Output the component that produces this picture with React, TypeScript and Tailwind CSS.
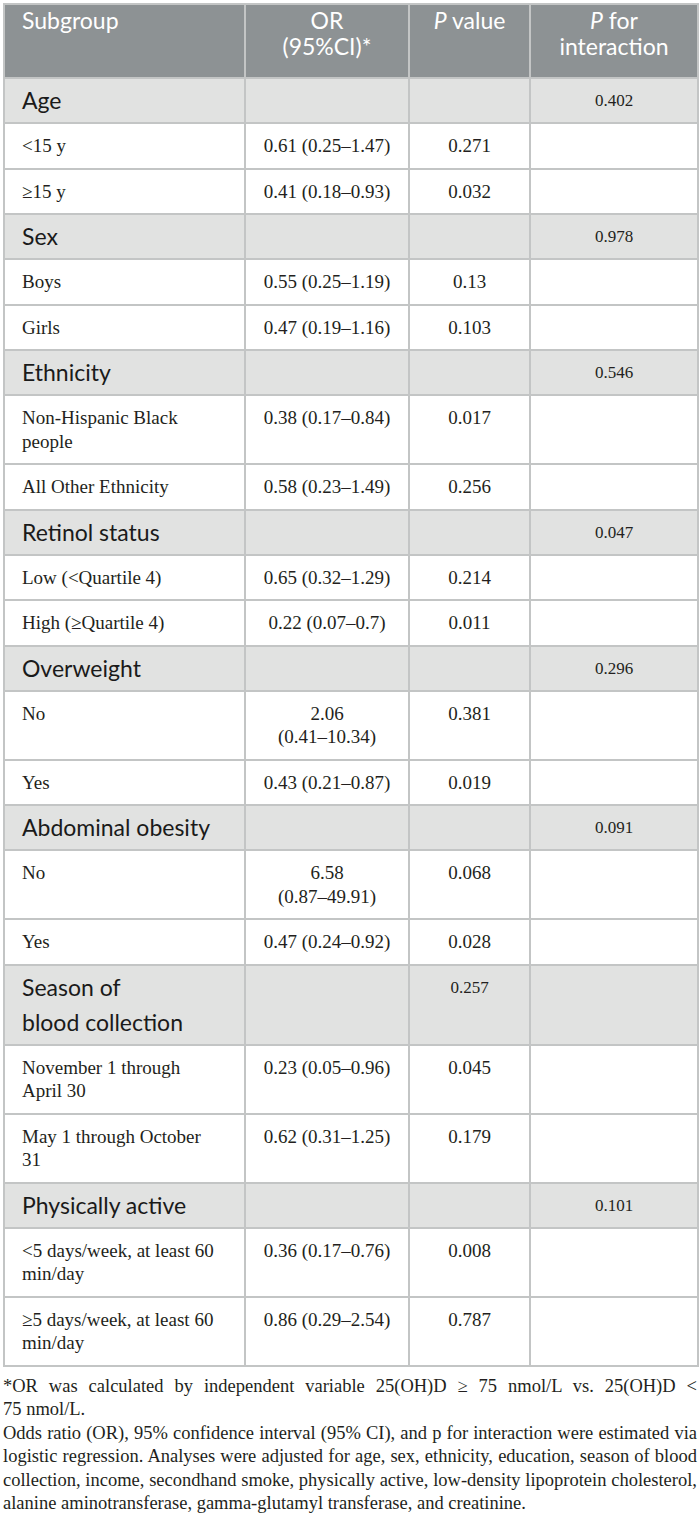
import React from "react";

type Row =
  | { kind: "section"; label: React.ReactNode; p?: string; pInt?: string }
  | { kind: "data"; label: React.ReactNode; or: React.ReactNode; p: string };

const rows: Row[] = [
  { kind: "section", label: "Age", pInt: "0.402" },
  { kind: "data", label: "<15 y", or: "0.61 (0.25–1.47)", p: "0.271" },
  { kind: "data", label: "≥15 y", or: "0.41 (0.18–0.93)", p: "0.032" },
  { kind: "section", label: "Sex", pInt: "0.978" },
  { kind: "data", label: "Boys", or: "0.55 (0.25–1.19)", p: "0.13" },
  { kind: "data", label: "Girls", or: "0.47 (0.19–1.16)", p: "0.103" },
  { kind: "section", label: "Ethnicity", pInt: "0.546" },
  {
    kind: "data",
    label: (
      <>
        Non-Hispanic Black
        <br />
        people
      </>
    ),
    or: "0.38 (0.17–0.84)",
    p: "0.017",
  },
  { kind: "data", label: "All Other Ethnicity", or: "0.58 (0.23–1.49)", p: "0.256" },
  { kind: "section", label: "Retinol status", pInt: "0.047" },
  { kind: "data", label: "Low (<Quartile 4)", or: "0.65 (0.32–1.29)", p: "0.214" },
  { kind: "data", label: "High (≥Quartile 4)", or: "0.22 (0.07–0.7)", p: "0.011" },
  { kind: "section", label: "Overweight", pInt: "0.296" },
  {
    kind: "data",
    label: "No",
    or: (
      <>
        2.06
        <br />
        (0.41–10.34)
      </>
    ),
    p: "0.381",
  },
  { kind: "data", label: "Yes", or: "0.43 (0.21–0.87)", p: "0.019" },
  { kind: "section", label: "Abdominal obesity", pInt: "0.091" },
  {
    kind: "data",
    label: "No",
    or: (
      <>
        6.58
        <br />
        (0.87–49.91)
      </>
    ),
    p: "0.068",
  },
  { kind: "data", label: "Yes", or: "0.47 (0.24–0.92)", p: "0.028" },
  {
    kind: "section",
    label: (
      <>
        Season of
        <br />
        blood collection
      </>
    ),
    p: "0.257",
  },
  {
    kind: "data",
    label: (
      <>
        November 1 through
        <br />
        April 30
      </>
    ),
    or: "0.23 (0.05–0.96)",
    p: "0.045",
  },
  {
    kind: "data",
    label: (
      <>
        May 1 through October
        <br />
        31
      </>
    ),
    or: "0.62 (0.31–1.25)",
    p: "0.179",
  },
  { kind: "section", label: "Physically active", pInt: "0.101" },
  {
    kind: "data",
    label: (
      <>
        &lt;5 days/week, at least 60
        <br />
        min/day
      </>
    ),
    or: "0.36 (0.17–0.76)",
    p: "0.008",
  },
  {
    kind: "data",
    label: (
      <>
        ≥5 days/week, at least 60
        <br />
        min/day
      </>
    ),
    or: "0.86 (0.29–2.54)",
    p: "0.787",
  },
];

const sans = "font-['Lato','Open_Sans',sans-serif]";
const serif = "font-['Liberation_Serif','Times_New_Roman',serif]";
const cellB = "border-2 border-[#c3c5c5]";

export default function App() {
  return (
    <div className="w-[700px] bg-white pt-[3px] text-[#231f20]">
      <table className="ml-[3px] w-[694px] table-fixed border-collapse border-2 border-[#b4b7b8]">
        <colgroup>
          <col className="w-[241px]" />
          <col className="w-[164px]" />
          <col className="w-[121px]" />
          <col className="w-[168px]" />
        </colgroup>
        <thead>
          <tr className={`bg-[#8d9294] text-white ${sans} text-[23px] leading-[26px]`}>
            <th className={`${cellB} h-[74px] px-[17px] pt-[2px] pb-[8px] text-left align-top font-normal`}>
              Subgroup
            </th>
            <th className={`${cellB} px-2 pt-[2px] text-center align-top font-normal`}>
              OR
              <br />
              (95%CI)*
            </th>
            <th className={`${cellB} px-2 pt-[2px] text-center align-top font-normal`}>
              <i>P</i> value
            </th>
            <th className={`${cellB} px-2 pt-[2px] text-center align-top font-normal`}>
              <i>P</i> for
              <br />
              interaction
            </th>
          </tr>
        </thead>
        <tbody>
          {rows.map((r, i) =>
            r.kind === "section" ? (
              <tr key={i} className="bg-[#e1e2e1]">
                <td className={`${cellB} ${sans} px-[17px] pt-[4px] pb-[4px] align-top text-[23px] leading-[35px] text-[#1a1a1a]`}>
                  {r.label}
                </td>
                <td className={`${cellB}`}></td>
                <td className={`${cellB} ${serif} pt-[12px] text-center align-top text-[17px] leading-[20px]`}>
                  {r.p ?? ""}
                </td>
                <td className={`${cellB} ${serif} pt-[12px] text-center align-top text-[17px] leading-[20px]`}>
                  {r.pInt ?? ""}
                </td>
              </tr>
            ) : (
              <tr key={i} className="bg-white">
                <td className={`${cellB} ${serif} px-[17px] pt-[10px] pb-[10px] align-top text-[19px] leading-[23.5px]`}>
                  {r.label}
                </td>
                <td className={`${cellB} ${serif} px-1 pt-[10px] pb-[10px] text-center align-top text-[19px] leading-[23.5px]`}>
                  {r.or}
                </td>
                <td className={`${cellB} ${serif} px-1 pt-[10px] pb-[10px] text-center align-top text-[19px] leading-[23.5px]`}>
                  {r.p}
                </td>
                <td className={`${cellB}`}></td>
              </tr>
            )
          )}
        </tbody>
      </table>
      <div className={`${serif} mt-[8px] px-[3px] text-[18.5px] leading-[23.6px] text-justify text-[#231f20]`}>
        <p>*OR was calculated by independent variable 25(OH)D ≥ 75 nmol/L vs. 25(OH)D &lt; 75{"\u00a0"}nmol/L.</p>
        <p>
          Odds ratio (OR), 95% confidence interval (95% CI), and p for interaction were estimated via logistic
          regression. Analyses were adjusted for age, sex, ethnicity, education, season of blood collection, income,
          secondhand smoke, physically active, low-density lipoprotein cholesterol, alanine aminotransferase,
          gamma-glutamyl transferase, and creatinine.
        </p>
      </div>
    </div>
  );
}
